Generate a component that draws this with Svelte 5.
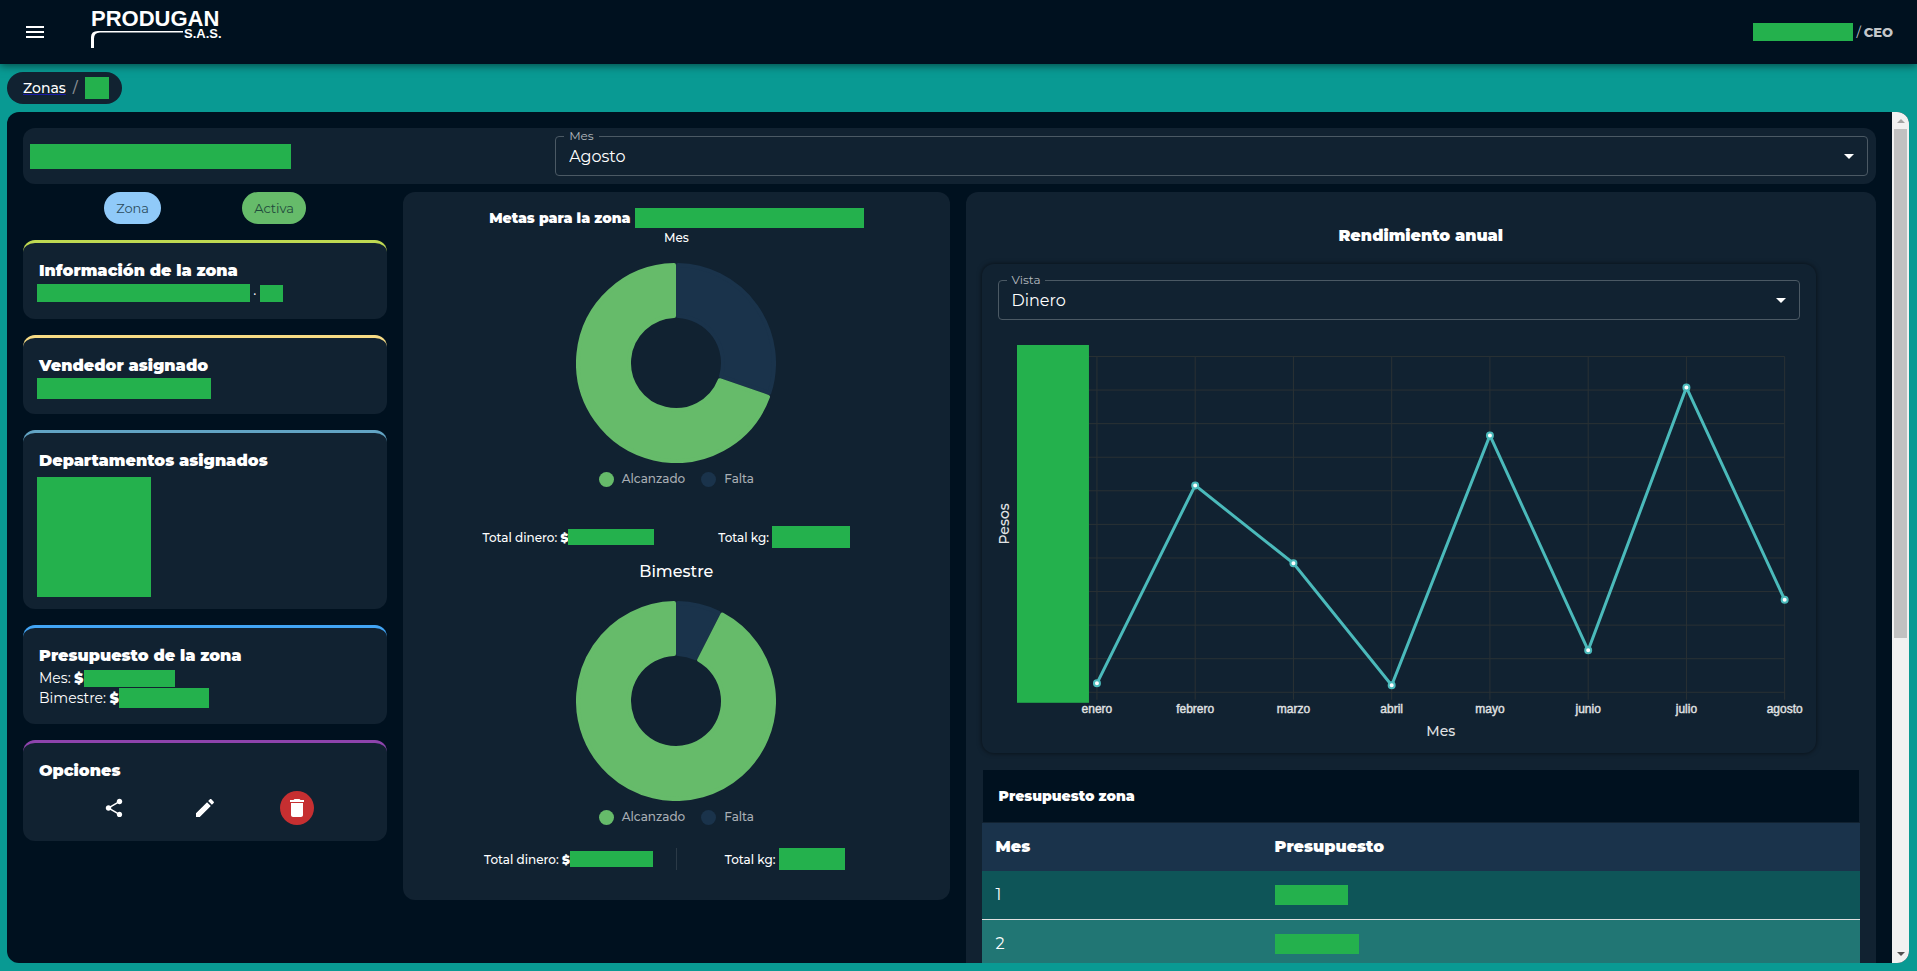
<script lang="ts">
  type Point = { month: string; value: number };

  const goals = [
    { title: 'Mes', missing: 109, money: 86, kg: 78 },
    { title: 'Bimestre', missing: 27, money: 83, kg: 66 }
  ];

  const points: Point[] = [
    { month: 'enero', value: 9 },
    { month: 'febrero', value: 207 },
    { month: 'marzo', value: 129 },
    { month: 'abril', value: 7 },
    { month: 'mayo', value: 257 },
    { month: 'junio', value: 42 },
    { month: 'julio', value: 305 },
    { month: 'agosto', value: 92.5 }
  ];

  const rows = [
    { month: 1, width: 73 },
    { month: 2, width: 84 }
  ];

  let month = $state('Agosto');
  let view = $state('Dinero');

  // line chart geometry, in viewBox units
  const left = 99;
  const bottom = 372.5;
  const stepX = 98.3;
  const stepY = 33.6;
  const x = (i: number) => left + i * stepX;
  const y = (v: number) => bottom - v;
  const line = points.map((p, i) => `${x(i)},${y(p.value)}`).join(' ');

  // ring slice between two angles (degrees, clockwise from the top),
  // pulled in by 2 so the rounded stroke fills it back out
  function slice(from: number, to: number) {
    const outer = 98;
    const inner = 47;
    const at = (r: number, deg: number, side: number) => {
      const a = (deg * Math.PI) / 180 + side * Math.asin(2 / r);
      return `${100 + r * Math.sin(a)} ${100 - r * Math.cos(a)}`;
    };
    const large = to - from > 180 ? 1 : 0;
    return `M${at(outer, from, 1)} A${outer} ${outer} 0 ${large} 1 ${at(outer, to, -1)}
      L${at(inner, to, -1)} A${inner} ${inner} 0 ${large} 0 ${at(inner, from, 1)} Z`;
  }
</script>

{#snippet hidden(width: number, height: number)}
  <span class="hidden" style="width: {width}px; height: {height}px"></span>
{/snippet}

<div class="page">
  <header class="topbar">
    <button class="menu" aria-label="Menú">
      <svg viewBox="0 0 24 24" width="24" height="24"><path d="M3 18h18v-2H3v2zm0-5h18v-2H3v2zm0-7v2h18V6H3z" /></svg>
    </button>
    <svg class="logo" viewBox="0 0 132 42" width="132" height="42">
      <text class="brand" x="0" y="19">PRODUGAN</text>
      <text class="suffix" x="93" y="31">S.A.S.</text>
      <path d="M0 41V30q0-6 7-6h85v1.500H9q-6 0-6 6V41z" />
    </svg>
    <div class="user">
      {@render hidden(100, 18)}
      <span>/</span>
      <strong>CEO</strong>
    </div>
  </header>

  <nav class="crumbs">
    <a href="#zonas">Zonas</a>
    <span class="slash">/</span>
    {@render hidden(24, 22)}
  </nav>

  <div class="shell">
    <main class="content">
      <section class="filter">
        <div class="name">{@render hidden(261, 25)}</div>
        <div class="field">
          <label for="month">Mes</label>
          <select id="month" bind:value={month}>
            <option>Agosto</option>
          </select>
        </div>
      </section>

      <div class="columns">
        <div class="side">
          <div class="chips">
            <span class="chip blue">Zona</span>
            <span class="chip green">Activa</span>
          </div>

          <section class="card lime">
            <h2>Información de la zona</h2>
            <p class="wide">{@render hidden(213, 18)}<span>·</span>{@render hidden(23, 17)}</p>
          </section>

          <section class="card sand">
            <h2>Vendedor asignado</h2>
            <p class="wide">{@render hidden(174, 21)}</p>
          </section>

          <section class="card steel">
            <h2>Departamentos asignados</h2>
            <p class="wide tall">{@render hidden(114, 120)}</p>
          </section>

          <section class="card sky">
            <h2>Presupuesto de la zona</h2>
            <p>Mes:&nbsp;<b>$</b>{@render hidden(91, 17)}</p>
            <p>Bimestre:&nbsp;<b>$</b>{@render hidden(90, 20)}</p>
          </section>

          <section class="card purple">
            <h2>Opciones</h2>
            <div class="actions">
              <button aria-label="Compartir">
                <svg viewBox="0 0 24 24" width="22" height="22"><path d="M18 16.080c-.76 0-1.440.3-1.960.77L8.910 12.700c.05-.23.09-.46.09-.7s-.04-.47-.09-.7l7.050-4.110c.54.5 1.250.81 2.040.81 1.660 0 3-1.340 3-3s-1.340-3-3-3-3 1.340-3 3c0 .24.04.47.09.7L8.040 9.810C7.500 9.310 6.790 9 6 9c-1.660 0-3 1.340-3 3s1.340 3 3 3c.79 0 1.500-.31 2.040-.81l7.120 4.160c-.05.21-.08.43-.08.65 0 1.610 1.310 2.920 2.920 2.920s2.920-1.310 2.920-2.920-1.310-2.920-2.920-2.920z" /></svg>
              </button>
              <button aria-label="Editar">
                <svg viewBox="0 0 24 24" width="24" height="24"><path d="M3 17.250V21h3.750L17.810 9.940l-3.750-3.750L3 17.250zM20.710 7.040c.39-.39.39-1.020 0-1.410l-2.340-2.340c-.39-.39-1.020-.39-1.410 0l-1.830 1.830 3.750 3.750 1.830-1.830z" /></svg>
              </button>
              <button class="danger" aria-label="Eliminar">
                <svg viewBox="0 0 24 24" width="24" height="24"><path d="M6 19c0 1.100.9 2 2 2h8c1.100 0 2-.9 2-2V7H6v12zM19 4h-3.500l-1-1h-5l-1 1H5v2h14V4z" /></svg>
              </button>
            </div>
          </section>
        </div>

        <section class="goals">
          <h2>Metas para la zona {@render hidden(229, 20)}</h2>
          {#each goals as goal, i (goal.title)}
            <h3 class:big={i === 1}>{goal.title}</h3>
            <svg class="donut" viewBox="0 0 200 200" width="200" height="200">
              <path class="missing" d={slice(0, goal.missing)} />
              <path class="reached" d={slice(goal.missing, 360)} />
            </svg>
            <ul class="legend">
              <li><i class="dot reached"></i>Alcanzado</li>
              <li><i class="dot missing"></i>Falta</li>
            </ul>
            <div class="totals" class:split={i === 1}>
              <p>Total dinero:&nbsp;<b>$</b>{@render hidden(goal.money, 16)}</p>
              <p>Total kg:&nbsp;{@render hidden(goal.kg, 22)}</p>
            </div>
          {/each}
        </section>

        <section class="performance">
          <h2>Rendimiento anual</h2>
          <div class="chart">
            <div class="field">
              <label for="view">Vista</label>
              <select id="view" bind:value={view}>
                <option>Dinero</option>
              </select>
            </div>
            <svg class="plot" viewBox="0 0 803 417">
              {#each { length: 11 } as _, i}
                <line class="grid" x1="91" x2={x(7)} y1={bottom - i * stepY} y2={bottom - i * stepY} />
              {/each}
              {#each points as p, i (p.month)}
                <line class="grid" x1={x(i)} x2={x(i)} y1={bottom - 10 * stepY} y2="380" />
                <text class="tick" x={x(i)} y="393">{p.month}</text>
              {/each}
              <rect class="scale" x="19" y="25" width="72" height="358" />
              <polyline points={line} />
              {#each points as p, i (p.month)}
                <circle cx={x(i)} cy={y(p.value)} r="3" />
              {/each}
              <text class="axis" x="443" y="416">Mes</text>
              <text class="axis" transform="translate(11 204) rotate(-90)">Pesos</text>
            </svg>
          </div>

          <h4>Presupuesto zona</h4>
          <table>
            <thead>
              <tr><th>Mes</th><th>Presupuesto</th></tr>
            </thead>
            <tbody>
              {#each rows as row (row.month)}
                <tr>
                  <td>{row.month}</td>
                  <td>{@render hidden(row.width, 20)}</td>
                </tr>
              {/each}
            </tbody>
          </table>
        </section>
      </div>
    </main>

    <div class="scrollbar" aria-hidden="true">
      <span class="arrow up"></span>
      <div class="track"><div class="thumb"></div></div>
      <span class="arrow down"></span>
    </div>
  </div>
</div>

<style>
  :global(body) {
    margin: 0;
    background: #099a93;
    color: #fff;
    font-family: Montserrat, Inter, sans-serif;
    font-size: 14px;
  }

  h2, h3, h4, p, ul {
    margin: 0;
    padding: 0;
  }

  b, h2, h4, strong, th {
    font-weight: 900;
  }

  button {
    display: flex;
    align-items: center;
    justify-content: center;
    padding: 0;
    border: 0;
    background: none;
    color: inherit;
    cursor: pointer;
  }

  svg {
    display: block;
    fill: #fff;
  }

  .hidden {
    display: inline-block;
    flex: none;
    background: #24b14d;
  }

  .page {
    display: flex;
    flex-direction: column;
    align-items: flex-start;
    box-sizing: border-box;
    height: 100vh;
    padding-bottom: 8px;
  }

  .topbar {
    display: flex;
    flex: none;
    align-items: center;
    box-sizing: border-box;
    width: 100%;
    height: 64px;
    padding: 0 24px 0 23px;
    background: #00111f;
    box-shadow: 0 2px 8px rgba(0, 0, 0, .5);
  }

  .logo {
    margin: 0 auto 8px 44px;
  }

  .logo text {
    font-family: "Liberation Sans", Arial, sans-serif;
    font-weight: 700;
  }

  .brand {
    font-size: 22px;
  }

  .suffix {
    font-size: 13px;
  }

  .user {
    display: flex;
    align-items: center;
    gap: 3px;
    color: #c4c7ca;
    font-size: 13px;
  }

  .user strong {
    font-weight: 800;
  }

  .crumbs {
    display: flex;
    flex: none;
    align-items: center;
    gap: 7px;
    box-sizing: border-box;
    height: 32px;
    margin: 8px 7px;
    padding: 0 13px 0 16px;
    border-radius: 16px;
    background: #112231;
    font-weight: 500;
  }

  .crumbs a {
    color: #fff;
    text-decoration: underline #1a1aa6;
  }

  .slash {
    color: #8b8f94;
  }

  .shell {
    display: flex;
    flex: 1;
    align-self: stretch;
    min-height: 0;
    margin: 0 8px 0 7px;
    border-radius: 12px;
    background: #00111f;
    overflow: hidden;
  }

  .content {
    flex: 1;
    min-width: 0;
    padding: 16px;
    overflow-y: auto;
    scrollbar-width: none;
  }

  .scrollbar {
    display: flex;
    flex: none;
    flex-direction: column;
    align-items: center;
    width: 17px;
    background: #f1f1f1;
  }

  .arrow {
    border: 4px solid transparent;
  }

  .up {
    margin: 3px 0 6px;
    border-bottom-color: #a3a3a3;
  }

  .down {
    margin: 6px 0 3px;
    border-top-color: #505050;
  }

  .track {
    flex: 1;
    width: 13px;
  }

  .thumb {
    height: 62.3%;
    background: #c1c1c1;
  }

  .filter {
    display: grid;
    grid-template-columns: 2fr 5fr;
    align-items: center;
    height: 56px;
    margin-bottom: 8px;
    padding: 0 8px 0 7px;
    border-radius: 12px;
    background: #112231;
  }

  .name {
    display: flex;
  }

  .field {
    position: relative;
  }

  .field label {
    position: absolute;
    top: -8px;
    left: 9px;
    padding: 0 5px;
    background: #112231;
    color: #b4babf;
    font-size: 12px;
    line-height: 16px;
  }

  .field select {
    display: block;
    width: 100%;
    height: 40px;
    padding: 0 32px 0 13px;
    border: 1px solid #4b5964;
    border-radius: 4px;
    background: none;
    color: #fff;
    font: inherit;
    font-size: 16px;
    appearance: none;
  }

  .field::after {
    content: '';
    position: absolute;
    top: 18px;
    right: 14px;
    border: 5px solid transparent;
    border-top-color: #fff;
    pointer-events: none;
  }

  .columns {
    display: grid;
    grid-template-columns: 2fr 3fr 5fr;
    align-items: start;
    gap: 16px;
  }

  .side {
    display: flex;
    flex-direction: column;
    gap: 16px;
  }

  .chips {
    display: flex;
    justify-content: space-evenly;
  }

  .chip {
    padding: 0 12px;
    border-radius: 16px;
    color: #2b4a5c;
    font-size: 13px;
    line-height: 32px;
  }

  .chip.blue {
    background: #90caf9;
  }

  .chip.green {
    background: #66bb6a;
    color: #1f4a3c;
  }

  .card {
    padding: 16px;
    border-top: 3px solid;
    border-radius: 12px;
    background: #112231;
  }

  .lime { border-color: #bfd952; }
  .sand { border-color: #f7dc85; }
  .steel { border-color: #62a4c4; }
  .sky { border-color: #42a5f5; }
  .purple { border-color: #8e44ad; }

  .card h2 {
    color: #fff;
    font-size: 16px;
    line-height: 24px;
  }

  .card p {
    display: flex;
    align-items: center;
    height: 20px;
    color: #fff;
  }

  .card .wide {
    gap: 3px;
    margin-left: -2px;
  }

  .card .tall {
    height: 120px;
    padding-top: 4px;
    margin-bottom: -4px;
  }

  .actions {
    display: flex;
    justify-content: space-evenly;
    margin-top: 8px;
  }

  .actions button {
    width: 34px;
    height: 34px;
    border-radius: 50%;
  }

  .actions .danger {
    background: #c62f31;
  }

  .goals {
    display: flex;
    flex-direction: column;
    align-items: center;
    padding: 14px 0 30px;
    border-radius: 12px;
    background: #112231;
  }

  .goals h2 {
    display: flex;
    align-items: center;
    gap: 4px;
    font-size: 14px;
    line-height: 24px;
  }

  .goals h3 {
    font-size: 12px;
    font-weight: 500;
    line-height: 16px;
  }

  .goals .big {
    font-size: 16px;
    line-height: 24px;
  }

  .donut {
    margin: 17px 0 8px;
  }

  .donut path {
    stroke-width: 4;
    stroke-linejoin: round;
  }

  .donut .missing {
    fill: #1a334b;
    stroke: #1a334b;
  }

  .donut .reached {
    fill: #66bb6a;
    stroke: #66bb6a;
  }

  .legend {
    display: flex;
    gap: 16px;
    color: #a8aeb4;
    font-size: 12px;
    font-weight: 500;
    line-height: 16px;
    list-style: none;
  }

  .legend li {
    display: flex;
    align-items: center;
    gap: 8px;
  }

  .dot {
    width: 15px;
    height: 15px;
    border-radius: 50%;
  }

  .dot.reached { background: #66bb6a; }
  .dot.missing { background: #1a334b; }

  .totals {
    display: grid;
    grid-template-columns: 1fr 1fr;
    width: 79%;
    margin: 39px 0 12px;
    font-size: 12px;
    font-weight: 500;
  }

  .totals.split {
    margin: 23px 0 0;
  }

  .totals p {
    display: flex;
    align-items: center;
    justify-content: center;
    height: 22px;
  }

  .split p + p {
    border-left: 1px solid #2b3a47;
  }

  .performance {
    padding: 32px 16px 16px;
    border-radius: 12px;
    background: #112231;
  }

  .performance h2 {
    margin-bottom: 16px;
    font-size: 16px;
    line-height: 24px;
    text-align: center;
  }

  .chart {
    box-sizing: border-box;
    width: 95%;
    padding: 16px;
    border-radius: 12px;
    box-shadow: 0 0 5px rgba(0, 0, 0, .6);
  }

  .plot {
    width: 100%;
    overflow: visible;
  }

  .grid {
    stroke: #2a3134;
  }

  .scale {
    fill: #24b14d;
  }

  .plot polyline {
    fill: none;
    stroke: #4bbabb;
    stroke-width: 3;
  }

  .plot circle {
    stroke: #4bbabb;
    stroke-width: 2;
  }

  .plot text {
    fill: #e0e2e4;
    text-anchor: middle;
  }

  .tick {
    font-family: "Liberation Sans", Arial, sans-serif;
    font-size: 12px;
    stroke: #e0e2e4;
    stroke-width: .4;
  }

  .axis {
    font-size: 14px;
    font-weight: 500;
  }

  .performance h4 {
    margin: 17px 1px 1px;
    padding: 0 16px;
    background: #00111f;
    font-size: 14px;
    line-height: 52px;
  }

  table {
    width: 100%;
    border-collapse: collapse;
    font-size: 16px;
    text-align: left;
  }

  th, td {
    height: 48px;
    padding: 0 14px;
  }

  th:first-child {
    width: 251px;
  }

  thead {
    background: #1a334b;
  }

  tbody tr {
    background: #0e5558;
  }

  tbody tr:nth-child(even) {
    border-top: 1px solid #e0e0e0;
    background: #217674;
  }

  td .hidden {
    display: block;
  }
</style>
